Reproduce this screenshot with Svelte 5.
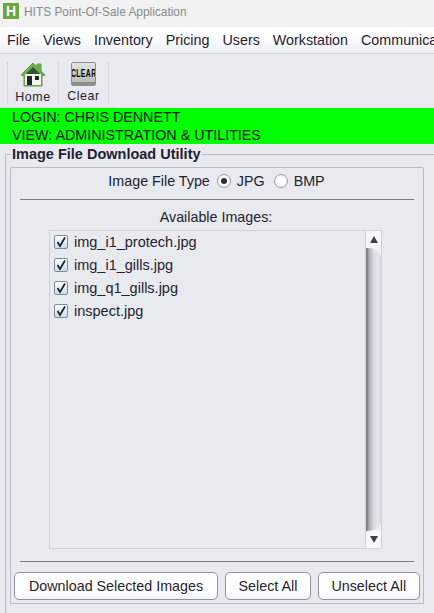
<script>
	const menus = ['File', 'Views', 'Inventory', 'Pricing', 'Users', 'Workstation', 'Communications'];
	const images = ['img_i1_protech.jpg', 'img_i1_gills.jpg', 'img_q1_gills.jpg', 'inspect.jpg'];
</script>

<div class="app">
	<div class="titlebar">
		<span class="logo">H</span>
		<span class="title">HITS Point-Of-Sale Application</span>
	</div>

	<div class="menubar">
		{#each menus as menu}
			<span>{menu}</span>
		{/each}
	</div>

	<div class="toolbar">
		<div class="tool home">
			<svg width="26" height="26" viewBox="0 0 26 26">
				<path d="M1 13 L13 1 L17 5 V2 H21 V9 L25 13 L22 14 V24 H4 V14 Z" fill="#6fae4e" stroke="#5c9a40" stroke-width="1" />
				<path d="M13 5 L21 13 H5 Z" fill="#33543a" />
				<rect x="5" y="12" width="16" height="11" fill="#f4f4ee" />
				<rect x="7" y="14" width="5" height="9" fill="#1d2a33" />
				<rect x="15" y="14" width="4" height="4" fill="#1d2a33" />
			</svg>
			<span>Home</span>
		</div>
		<div class="tool clear">
			<div class="key"><span>CLEAR</span></div>
			<span>Clear</span>
		</div>
	</div>

	<div class="status">
		<div>LOGIN: CHRIS DENNETT</div>
		<div>VIEW: ADMINISTRATION &amp; UTILITIES</div>
	</div>

	<div class="group">
		<div class="group-title">Image File Download Utility</div>
		<div class="panel">
			<div class="file-type">
				<span>Image File Type</span>
				<span class="radio on"></span>
				<span>JPG</span>
				<span class="radio"></span>
				<span>BMP</span>
			</div>
			<div class="rule"></div>
			<div class="avail">Available Images:</div>
			<div class="list">
				<div class="items">
					{#each images as image}
						<div class="item">
							<span class="check">
								<svg width="12" height="12" viewBox="0 0 12 12">
									<path d="M2.5 6 L5 10 L10 1.5" fill="none" stroke="#1c2530" stroke-width="1.8" />
								</svg>
							</span>
							<span>{image}</span>
						</div>
					{/each}
				</div>
				<div class="scrollbar">
					<div class="arrow"><span class="up"></span></div>
					<div class="thumb"></div>
					<div class="arrow"><span class="down"></span></div>
				</div>
			</div>
			<div class="rule bottom"></div>
			<div class="buttons">
				<button class="wide">Download Selected Images</button>
				<button>Select All</button>
				<button>Unselect All</button>
			</div>
		</div>
	</div>
</div>

<style>
	:global(body) {
		margin: 0;
		background: #e9eaf0;
	}

	.app {
		width: 434px;
		height: 613px;
		overflow: hidden;
		display: flex;
		flex-direction: column;
		font-family: 'Liberation Sans', Arial, sans-serif;
		font-size: 14.3px;
		color: #1f2233;
	}

	.titlebar {
		height: 27px;
		flex: none;
		background: #f2f2f3;
		display: flex;
		align-items: flex-start;
		padding: 3px 0 0 3px;
		box-sizing: border-box;
		gap: 5px;
	}

	.logo {
		width: 16px;
		height: 16px;
		background: #6aa83f;
		color: #fff;
		font-weight: 700;
		font-size: 14px;
		line-height: 16px;
		text-align: center;
	}

	.title {
		font-size: 11.9px;
		line-height: 18px;
		color: #8a8a8a;
	}

	.menubar {
		height: 27px;
		flex: none;
		box-sizing: border-box;
		background: linear-gradient(#fff, #fff 30%, #eef0f8);
		border-bottom: 1px solid #d2d4e0;
		display: flex;
		align-items: center;
		gap: 13px;
		padding: 0 0 1px 7px;
		white-space: nowrap;
		overflow: hidden;
	}

	.toolbar {
		height: 54px;
		flex: none;
		display: flex;
		width: 116px;
		box-sizing: border-box;
		padding: 8px 0 0 7px;
		border-bottom: 1px solid #d8d9e2;
	}

	.tool {
		display: flex;
		flex-direction: column;
		align-items: center;
		font-size: 12.4px;
		letter-spacing: 0.6px;
		border-left: 1px dotted #c8c9d2;
		height: 42px;
		box-sizing: border-box;
	}

	.tool > span {
		line-height: 16px;
	}

	.home {
		width: 51px;
	}

	.home svg {
		flex: none;
		margin-bottom: 1px;
	}

	.clear {
		width: 51px;
		border-right: 1px dotted #c8c9d2;
	}

	.key {
		width: 25px;
		height: 25px;
		margin-bottom: 2px;
		box-sizing: border-box;
		border-radius: 2px;
		background: linear-gradient(#e4e4e2, #b5b5b2);
		border: 1px solid #8f8f8c;
		box-shadow: inset 0 -3px 0 #8e8e8a;
		display: flex;
		align-items: center;
		justify-content: center;
		overflow: hidden;
	}

	.key span {
		font-size: 10px;
		font-weight: 700;
		color: #000;
		line-height: 1;
		transform: scaleX(0.68);
	}

	.status {
		height: 36px;
		flex: none;
		background: #00ff00;
		color: #061806;
		padding: 0 0 0 12px;
		line-height: 18px;
		white-space: nowrap;
	}

	.group {
		flex: 1;
		position: relative;
		margin: 10px 0 0 5px;
		border: 1px solid #b4bccd;
		border-right: 0;
		border-bottom: 0;
		border-radius: 2px 0 0 0;
		padding: 12px 0 9px 4px;
		display: flex;
	}

	.group-title {
		position: absolute;
		top: -10px;
		left: 5px;
		padding: 0 1px;
		background: #e9eaf0;
		font-weight: 700;
		font-size: 14.5px;
		line-height: 18px;
	}

	.panel {
		width: 414px;
		box-sizing: border-box;
		border: 1px solid #b4bccd;
		border-radius: 2px 2px 0 0;
		padding: 0 3px 3px 3px;
		display: flex;
		flex-direction: column;
	}

	.file-type {
		height: 24px;
		display: flex;
		align-items: center;
		justify-content: center;
		margin-left: -1px;
		gap: 6px;
		padding-top: 1px;
		box-sizing: border-box;
	}

	.radio {
		width: 14px;
		height: 14px;
		flex: none;
		box-sizing: border-box;
		border-radius: 50%;
		border: 1px solid #98a0ac;
		background: radial-gradient(circle, #fff 40%, #dfe3ea);
		position: relative;
		margin-left: 1px;
	}

	.radio + span + .radio {
		margin-left: 3px;
	}

	.radio.on::after {
		content: '';
		position: absolute;
		left: 3px;
		top: 3px;
		width: 6px;
		height: 6px;
		border-radius: 50%;
		background: #26303a;
	}

	.rule {
		height: 1px;
		flex: none;
		background: #7c7c7c;
		margin: 7px 6px 0 6px;
	}

	.rule.bottom {
		margin-top: 12px;
	}

	.avail {
		height: 21px;
		flex: none;
		margin-top: 9px;
		line-height: 17px;
		text-align: center;
		margin-right: 2px;
	}

	.list {
		flex: 1;
		margin: 0 38px 0 35px;
		border: 1px solid #d0d2da;
		display: flex;
		min-height: 0;
	}

	.items {
		flex: 1;
		margin-top: -1px;
	}

	.item {
		height: 23px;
		display: flex;
		align-items: center;
		gap: 6px;
		padding-left: 4px;
		font-size: 14.5px;
	}

	.check {
		width: 14px;
		height: 14px;
		flex: none;
		box-sizing: border-box;
		border: 1px solid #7d8ba0;
		border-radius: 2px;
		background: linear-gradient(#fff, #cfd9e6);
		display: flex;
		align-items: center;
		justify-content: center;
	}

	.scrollbar {
		width: 15px;
		flex: none;
		display: flex;
		flex-direction: column;
		border-left: 1px solid #d0d2da;
		background: #eeeff3;
	}

	.arrow {
		height: 17px;
		flex: none;
		background: #f7f8fb;
		display: flex;
		align-items: center;
		justify-content: center;
	}

	.up,
	.down {
		width: 0;
		height: 0;
		border-left: 4px solid transparent;
		border-right: 4px solid transparent;
	}

	.up {
		border-bottom: 7px solid #3c4048;
	}

	.down {
		border-top: 7px solid #3c4048;
	}

	.thumb {
		flex: 1;
		border-radius: 0 14px 14px 0 / 0 10px 10px 0;
		background: linear-gradient(90deg, #6f7076, #a9abb2 20%, #d9dbe2 50%, #e6e7ec 80%, #d2d4da);
	}

	.buttons {
		display: flex;
		gap: 7px;
		margin-top: 10px;
		flex: none;
	}

	button {
		height: 28px;
		box-sizing: border-box;
		border: 1px solid #8e939c;
		border-radius: 5px;
		background: linear-gradient(#fff, #fff 70%, #f3f4f7);
		font: inherit;
		font-size: 14.3px;
		color: #1f2233;
		padding: 0 12.5px;
		white-space: nowrap;
		flex: none;
	}

	button.wide {
		padding: 0 14px;
	}
</style>
